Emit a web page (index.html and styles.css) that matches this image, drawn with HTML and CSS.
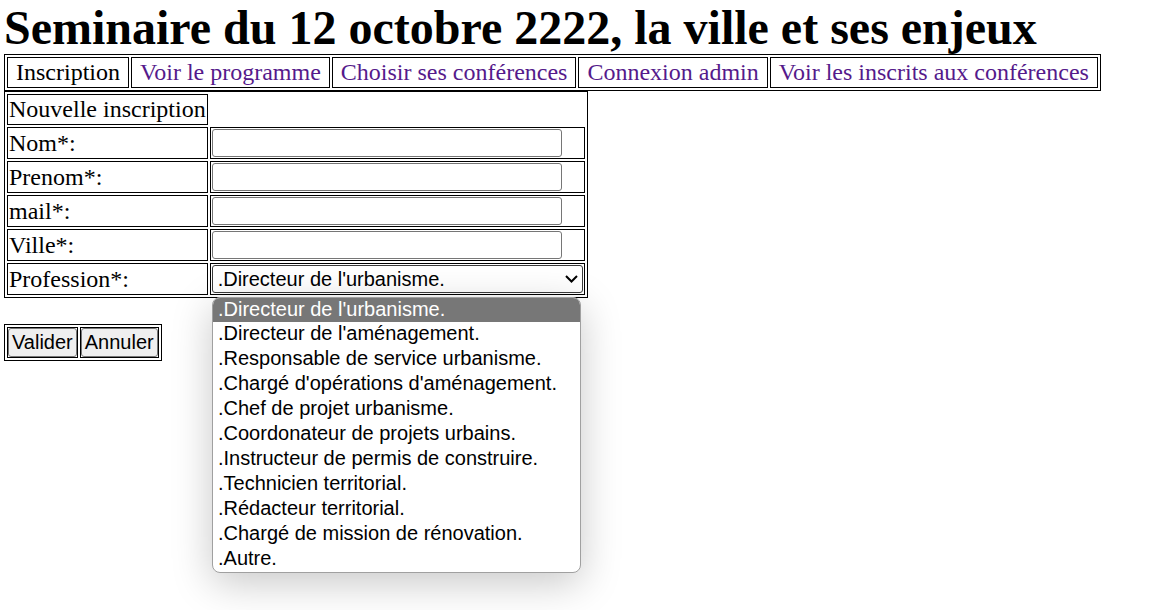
FILE: index.html
```html
<!DOCTYPE html>
<html lang="fr">
<head>
<meta charset="utf-8">
<title>Seminaire</title>
<link rel="stylesheet" href="styles.css">
</head>
<body>
<h1 class="title">Seminaire du 12 octobre 2222, la ville et ses enjeux</h1>
<table class="tabs">
  <tr>
    <td class="tab tab-current">Inscription</td>
    <td class="tab"><a class="tab-link" href="#">Voir le programme</a></td>
    <td class="tab"><a class="tab-link" href="#">Choisir ses conférences</a></td>
    <td class="tab"><a class="tab-link" href="#">Connexion admin</a></td>
    <td class="tab"><a class="tab-link" href="#">Voir les inscrits aux conférences</a></td>
  </tr>
</table>
<table class="form">
  <tr><td class="cell head">Nouvelle inscription</td><td class="empty"></td></tr>
  <tr><td class="cell label">Nom*:</td><td class="cell field"><input class="text-input" type="text"></td></tr>
  <tr><td class="cell label">Prenom*:</td><td class="cell field"><input class="text-input" type="text"></td></tr>
  <tr><td class="cell label">mail*:</td><td class="cell field"><input class="text-input" type="text"></td></tr>
  <tr><td class="cell label">Ville*:</td><td class="cell field"><input class="text-input" type="text"></td></tr>
  <tr><td class="cell label">Profession*:</td><td class="cell field">
    <div class="select-box">
      <span class="select-value">.Directeur de l'urbanisme.</span>
      <svg class="chevron" width="13" height="8" viewBox="0 0 13 8"><path d="M1 1 L6.5 6.5 L12 1" fill="none" stroke="#000" stroke-width="2"/></svg>
    </div>
  </td></tr>
</table>
<table class="actions">
  <tr>
    <td class="action-cell"><button class="btn" type="button">Valider</button></td>
    <td class="action-cell"><button class="btn" type="button">Annuler</button></td>
  </tr>
</table>
<ul class="dropdown">
  <li class="option option-selected">.Directeur de l'urbanisme.</li>
  <li class="option">.Directeur de l'aménagement.</li>
  <li class="option">.Responsable de service urbanisme.</li>
  <li class="option">.Chargé d'opérations d'aménagement.</li>
  <li class="option">.Chef de projet urbanisme.</li>
  <li class="option">.Coordonateur de projets urbains.</li>
  <li class="option">.Instructeur de permis de construire.</li>
  <li class="option">.Technicien territorial.</li>
  <li class="option">.Rédacteur territorial.</li>
  <li class="option">.Chargé de mission de rénovation.</li>
  <li class="option">.Autre.</li>
</ul>
</body>
</html>
```

FILE: styles.css
```css
html, body {
  margin: 0;
  background: #fff;
}
body {
  padding: 0 4px;
  font-family: "Liberation Serif", "Times New Roman", serif;
  font-size: 24px;
  color: #000;
  position: relative;
  height: 610px;
  overflow: hidden;
}
.title {
  margin: 1px 0 0 0;
  font-size: 48px;
  line-height: 53px;
  font-weight: bold;
  white-space: nowrap;
}
table {
  border: 1px solid #000;
  border-collapse: separate;
  border-spacing: 2px;
}
td {
  padding: 1px;
  line-height: 27px;
}
.tab {
  border: 1px solid #000;
  padding: 1px 8px;
  line-height: 27px;
  white-space: nowrap;
}
.tab-current {
  outline: 1px solid #fff;
  outline-offset: -2px;
}
.tab-link {
  color: #551a8b;
  text-decoration: none;
}
.cell {
  border: 1px solid #000;
}
.head, .label {
  width: 194px;
  white-space: nowrap;
}
.field {
  width: 371px;
  padding: 1px;
}
.text-input {
  display: block;
  box-sizing: border-box;
  width: 350px;
  height: 28px;
  margin: 0;
  border: 1px solid #767676;
  border-radius: 3px;
  font: 20px "Liberation Sans", Arial, sans-serif;
  background: #fff;
}
.select-box {
  box-sizing: border-box;
  width: 371px;
  height: 28px;
  border: 1px solid #3b3b3b;
  border-radius: 3px;
  display: flex;
  align-items: center;
  justify-content: space-between;
  padding: 0 4px 0 5px;
  font: 20px/23px "Liberation Sans", Arial, sans-serif;
  background: #fff;
}
.actions {
  margin-top: 26px;
}
.action-cell {
  border: 1px solid #000;
  padding: 0;
  line-height: normal;
}
.btn {
  display: block;
  margin: 0;
  padding: 2px 3px;
  border: 1px solid #767676;
  border-radius: 3px;
  background: #efefef;
  font: 20px/23px "Liberation Sans", Arial, sans-serif;
  color: #000;
}
.dropdown {
  position: absolute;
  left: 212px;
  top: 297px;
  width: 367px;
  margin: 0;
  padding: 0;
  list-style: none;
  border: 1px solid #a0a0a0;
  border-radius: 8px;
  background: #fff;
  overflow: hidden;
  box-shadow: 0 10px 40px rgba(0, 0, 0, 0.22);
  font: 20px/23px "Liberation Sans", Arial, sans-serif;
}
.option {
  padding: 0 5px;
  height: 25px;
  white-space: nowrap;
}
.option-selected {
  background: #777;
  color: #fff;
  height: 24px;
}
```
